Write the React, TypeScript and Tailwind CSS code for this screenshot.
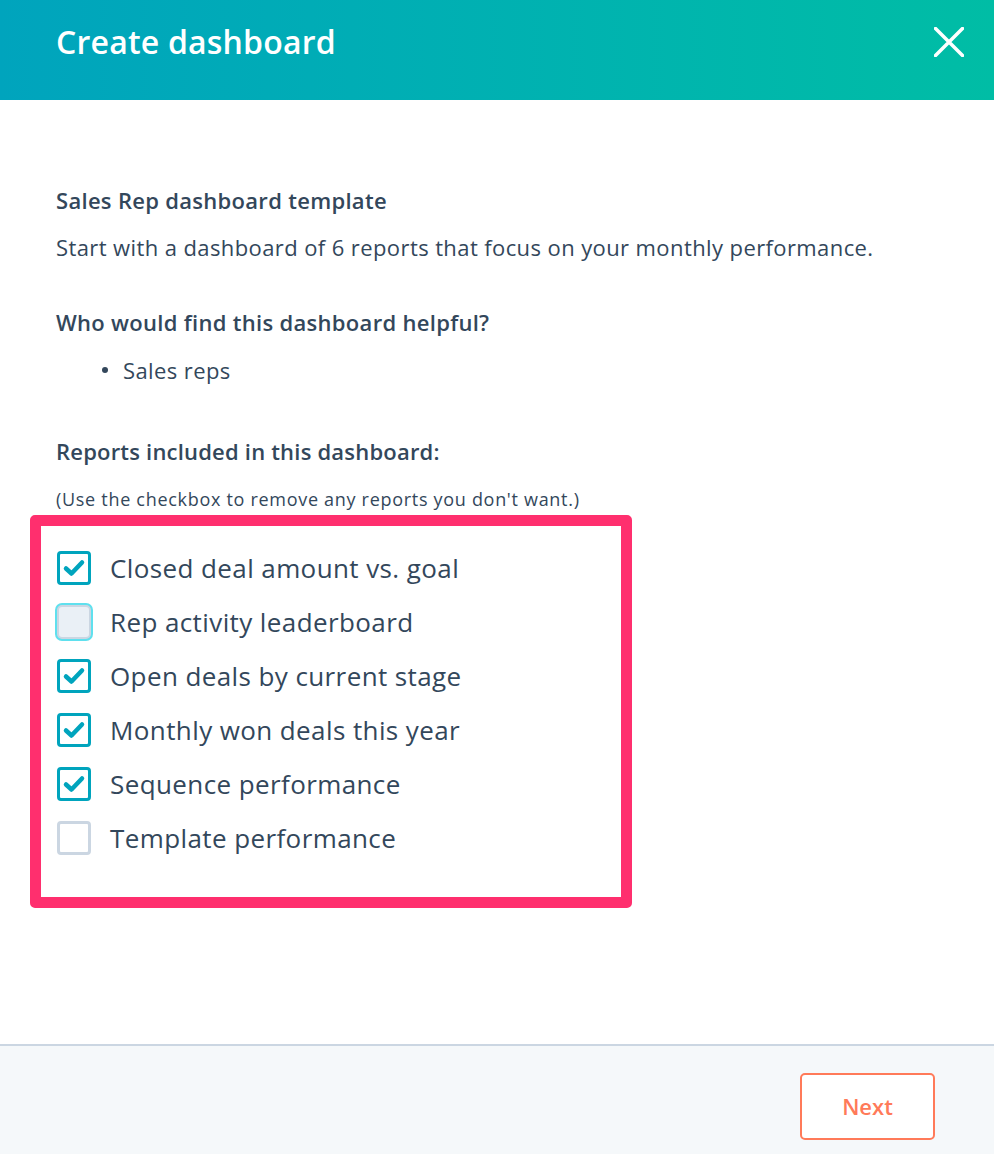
import { useState } from 'react'

const reports = [
  { label: 'Closed deal amount vs. goal', checked: true },
  { label: 'Rep activity leaderboard', checked: false, focus: true },
  { label: 'Open deals by current stage', checked: true },
  { label: 'Monthly won deals this year', checked: true },
  { label: 'Sequence performance', checked: true },
  { label: 'Template performance', checked: false },
]

function Checkbox({ checked, focus }: { checked: boolean; focus?: boolean }) {
  if (checked) {
    return (
      <span className="flex h-[34px] w-[34px] shrink-0 items-center justify-center rounded-[4px] border-[3px] border-[#00a4bd] bg-white">
        <svg width="24" height="24" viewBox="0 0 24 24">
          <path d="M4 12.5 L9.5 17.5 L20 6.5" fill="none" stroke="#00a4bd" strokeWidth="4.5" strokeLinecap="round" strokeLinejoin="round" />
        </svg>
      </span>
    )
  }
  if (focus) {
    return (
      <span className="h-[34px] w-[34px] shrink-0 rounded-[5px] border-[2px] border-[#cbd6e2] bg-[#eaf0f6] shadow-[0_0_0_2px_#5fe0ee]" />
    )
  }
  return <span className="h-[34px] w-[34px] shrink-0 rounded-[4px] border-[3px] border-[#cbd6e2] bg-white" />
}

export default function App() {
  const [items, setItems] = useState(reports)

  return (
    <div className="flex h-[1154px] w-full flex-col bg-white text-[#33475b]" style={{ fontFamily: '"Open Sans", "Noto Sans", sans-serif' }}>
      {/* Header */}
      <header className="flex h-[100px] shrink-0 items-center justify-between bg-gradient-to-r from-[#00a4bd] to-[#00bda5] pb-4 pl-14 pr-[27px]">
        <h1 className="text-[32px] font-semibold tracking-[0.2px] text-white">Create dashboard</h1>
        <button className="flex h-9 w-9 items-center justify-center">
          <svg width="30" height="30" viewBox="0 0 30 30">
            <path d="M1.5 1.5 L28.5 28.5 M28.5 1.5 L1.5 28.5" stroke="white" strokeWidth="3.5" strokeLinecap="round" />
          </svg>
        </button>
      </header>

      {/* Body */}
      <main className="flex-1 pt-[86px]">
        <div className="px-14 text-[22px] leading-[28px] tracking-[0.4px]">
          <h2 className="font-semibold tracking-[0.3px]">Sales Rep dashboard template</h2>
          <p className="mt-[19px]">
            Start with a dashboard of 6 reports that focus on your monthly performance.
          </p>
          <h3 className="mt-[47px] font-semibold tracking-[0.3px]">Who would find this dashboard helpful?</h3>
          <ul className="mt-[20px] pl-[46px]">
            <li className="flex items-center gap-[15px]">
              <span className="h-[6px] w-[6px] rounded-full bg-[#33475b]" />
              Sales reps
            </li>
          </ul>
          <h3 className="mt-[53px] font-semibold tracking-[0.2px]">Reports included in this dashboard:</h3>
          <p className="mt-[21px] text-[18px] leading-[26px] tracking-[0.7px]">(Use the checkbox to remove any reports you don't want.)</p>
        </div>

        <div className="ml-[30px] mt-[3px] w-[602px] rounded-[5px] border-[11px] border-[#ff2f6e] pb-[32px] pl-[16px] pt-[15px]">
          {items.map((r, i) => (
            <label
              key={r.label}
              className="flex h-[54px] cursor-pointer items-center gap-[19px]"
              onClick={() => setItems(items.map((x, j) => (j === i ? { ...x, checked: !x.checked } : x)))}
            >
              <Checkbox checked={r.checked} focus={r.focus} />
              <span className="text-[26px] tracking-[0.4px]">{r.label}</span>
            </label>
          ))}
        </div>
      </main>

      {/* Footer */}
      <footer className="flex h-[110px] shrink-0 items-start justify-end border-t-2 border-[#cbd6e2] bg-[#f5f8fa] pr-[59px] pt-[27px]">
        <button className="h-[67px] w-[135px] rounded-[5px] border-2 border-[#ff7a59] bg-white text-[22px] font-semibold text-[#ff7a59]">
          Next
        </button>
      </footer>
    </div>
  )
}
